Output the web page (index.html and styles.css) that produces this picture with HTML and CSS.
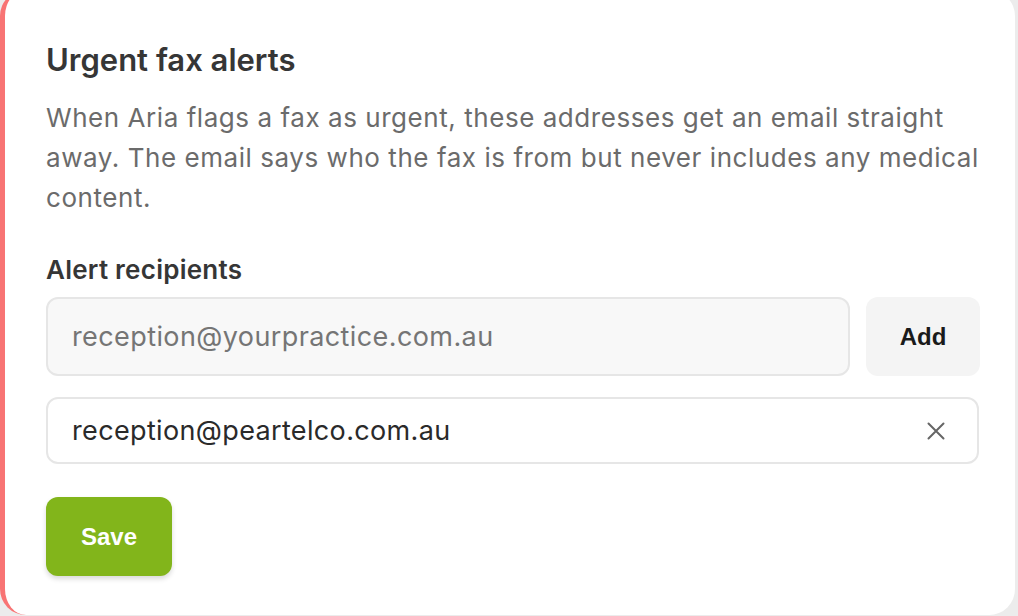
FILE: index.html
```html
<!DOCTYPE html>
<html>
<head>
<meta charset="utf-8">
<link rel="stylesheet" href="styles.css">
</head>
<body>
<div class="card">
  <h2 class="title">Urgent fax alerts</h2>
  <p class="desc">When Aria flags a fax as urgent, these addresses get an email straight<br>away. The email says who the fax is from but never includes any medical<br>content.</p>
  <div class="label">Alert recipients</div>
  <div class="add-row">
    <div class="input">reception@yourpractice.com.au</div>
    <button class="btn-add">Add</button>
  </div>
  <div class="recipient">
    <span class="email">reception@peartelco.com.au</span>
    <svg class="remove" width="18" height="18" viewBox="0 0 18 18"><path d="M1.5 1.5 L16.5 16.5 M16.5 1.5 L1.5 16.5" stroke="#666" stroke-width="2" fill="none" stroke-linecap="round"/></svg>
  </div>
  <button class="btn-save">Save</button>
</div>
</body>
</html>
```
FILE: styles.css
```css
html, body {
  margin: 0;
  padding: 0;
  background: #ececec;
  height: 616px;
  overflow: hidden;
}
.card {
  box-sizing: border-box;
  width: 1015px;
  height: 625px;
  margin-top: -10px;
  background: #fff;
  border-left: 5px solid #f87474;
  border-radius: 26px;
  padding: 50px 36px 0 41px;
  font-family: Inter, "Noto Sans", sans-serif;
  display: flex;
  flex-direction: column;
  align-items: flex-start;
}
.title {
  margin: 0;
  font-size: 31px;
  line-height: 40px;
  font-weight: 600;
  color: #363636;
  letter-spacing: 0px;
}
.desc {
  margin: 18px 0 0;
  font-size: 26px;
  line-height: 40px;
  color: #6b6b6b;
  letter-spacing: 0.55px;
  white-space: nowrap;
}
.label {
  margin-top: 36px;
  font-size: 26px;
  line-height: 32px;
  font-weight: 600;
  color: #363636;
  letter-spacing: 0.25px;
}
.add-row {
  margin-top: 11px;
  display: flex;
  gap: 16px;
  width: 934px;
}
.input {
  flex: 1;
  box-sizing: border-box;
  height: 79px;
  background: #f8f8f8;
  border: 2px solid #e6e6e6;
  border-radius: 12px;
  padding-left: 24px;
  display: flex;
  align-items: center;
  font-size: 27px;
  letter-spacing: 0.4px;
  color: #757575;
}
.btn-add {
  width: 114px;
  height: 79px;
  border: none;
  border-radius: 12px;
  background: #f4f4f4;
  font-family: "Liberation Sans", Arial, sans-serif;
  font-weight: 700;
  font-size: 24px;
  color: #1a1a1a;
}
.recipient {
  margin-top: 21px;
  box-sizing: border-box;
  width: 933px;
  height: 67px;
  border: 2px solid #e6e6e6;
  border-radius: 12px;
  padding: 0 32px 0 24px;
  display: flex;
  align-items: center;
  justify-content: space-between;
}
.email {
  font-size: 27px;
  letter-spacing: 0.35px;
  color: #2a2a2a;
}
.remove {
  display: block;
}
.btn-save {
  margin-top: 33px;
  width: 126px;
  height: 79px;
  border: none;
  border-radius: 12px;
  background: #82b51b;
  color: #fff;
  font-family: "Liberation Sans", Arial, sans-serif;
  font-weight: 700;
  font-size: 24px;
  box-shadow: 0 3px 5px rgba(0,0,0,0.15);
}
```
